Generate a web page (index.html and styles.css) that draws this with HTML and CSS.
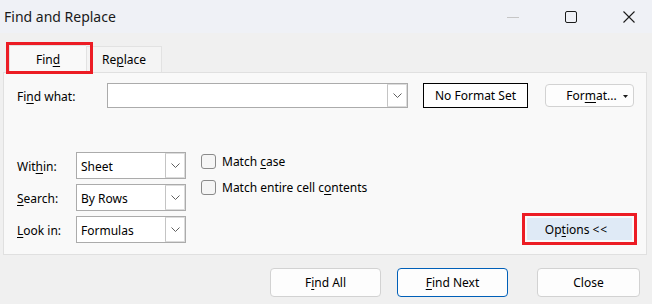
FILE: index.html
```html
<!DOCTYPE html>
<html>
<head>
<meta charset="utf-8">
<link rel="stylesheet" href="styles.css">
</head>
<body>
<div class="window">
  <div class="titlebar">
    <span class="title">Find and Replace</span>
    <div class="controls">
      <svg class="ctl" width="12" height="12" viewBox="0 0 12 12"><line x1="0" y1="6.5" x2="12" y2="6.5" stroke="#c6c6c6" stroke-width="1"/></svg>
      <svg class="ctl" width="12" height="12" viewBox="0 0 12 12"><rect x="0.5" y="0.5" width="11" height="11" rx="1.5" fill="none" stroke="#1b1b1b" stroke-width="1"/></svg>
      <svg class="ctl" width="12" height="12" viewBox="0 0 12 12"><path d="M0.5 0.5 L11.5 11.5 M11.5 0.5 L0.5 11.5" stroke="#1b1b1b" stroke-width="1.1" fill="none"/></svg>
    </div>
  </div>
  <div class="content">
    <div class="tabs">
      <div class="tab active">Fin<u>d</u></div>
      <div class="tab">Re<u>p</u>lace</div>
    </div>
    <div class="panel">
      <div class="row-find">
        <span class="label find-label">Fi<u>n</u>d what:</span>
        <div class="combo find-input">
          <span class="combo-text"></span>
          <span class="drop"><svg width="9" height="5" viewBox="0 0 9 5"><path d="M0.5 0.5 L4.5 4.5 L8.5 0.5" fill="none" stroke="#5f5f5f" stroke-width="1"/></svg></span>
        </div>
        <div class="noformat">No Format Set</div>
        <div class="btn format">For<u>m</u>at...<svg class="caret" width="5" height="3" viewBox="0 0 5 3"><path d="M0 0 L5 0 L2.5 3 Z" fill="#1b1b1b"/></svg></div>
      </div>
      <div class="row-opts">
        <div class="fields">
          <span class="label">Wit<u>h</u>in:</span>
          <div class="combo">
            <span class="combo-text">Sheet</span>
            <span class="drop"><svg width="9" height="5" viewBox="0 0 9 5"><path d="M0.5 0.5 L4.5 4.5 L8.5 0.5" fill="none" stroke="#5f5f5f" stroke-width="1"/></svg></span>
          </div>
          <span class="label"><u>S</u>earch:</span>
          <div class="combo">
            <span class="combo-text">By Rows</span>
            <span class="drop"><svg width="9" height="5" viewBox="0 0 9 5"><path d="M0.5 0.5 L4.5 4.5 L8.5 0.5" fill="none" stroke="#5f5f5f" stroke-width="1"/></svg></span>
          </div>
          <span class="label"><u>L</u>ook in:</span>
          <div class="combo">
            <span class="combo-text">Formulas</span>
            <span class="drop"><svg width="9" height="5" viewBox="0 0 9 5"><path d="M0.5 0.5 L4.5 4.5 L8.5 0.5" fill="none" stroke="#5f5f5f" stroke-width="1"/></svg></span>
          </div>
        </div>
        <div class="checks">
          <label class="check"><span class="box"></span><span>Match <u>c</u>ase</span></label>
          <label class="check"><span class="box"></span><span>Match entire cell c<u>o</u>ntents</span></label>
        </div>
        <div class="btn options">Op<u>t</u>ions <span class="lt">&lt;&lt;</span></div>
      </div>
    </div>
    <div class="actions">
      <div class="btn action">F<u>i</u>nd All</div>
      <div class="btn action primary"><u>F</u>ind Next</div>
      <div class="btn action close">Close</div>
    </div>
  </div>
</div>
</body>
</html>
```

FILE: styles.css
```css
* { box-sizing: border-box; }
html, body {
  margin: 0;
  padding: 0;
}
body {
  width: 652px;
  height: 304px;
  overflow: hidden;
  background: #f0f0f0;
  font-family: "Noto Sans", "Open Sans", sans-serif;
  font-size: 12px;
  color: #000;
}
u { text-decoration: underline; text-underline-offset: 2px; text-decoration-thickness: 1px; }

.window {
  width: 652px;
  height: 304px;
  display: flex;
  flex-direction: column;
}

.titlebar {
  height: 33px;
  background: #eff1f6;
  display: flex;
  align-items: center;
  justify-content: space-between;
  padding-left: 4px;
  padding-right: 17px;
}
.title {
  font-size: 14px;
  color: #1a1a1a;
  margin-top: -1px;
}
.controls {
  display: flex;
  align-items: center;
  gap: 46px;
}
.ctl { display: block; }

.content {
  flex: 1;
  padding: 0 5px 0 3px;
  display: flex;
  flex-direction: column;
}

.tabs {
  display: flex;
  align-items: flex-end;
  padding-left: 6px;
  height: 39px;
  position: relative;
  z-index: 2;
}
.tab {
  height: 26px;
  width: 76px;
  display: flex;
  align-items: center;
  justify-content: center;
  border: 1px solid #e2e2e2;
  border-bottom: none;
  background: #f4f4f4;
  padding-bottom: 1px;
}
.tab.active {
  width: 77px;
  height: 28px;
  background: #f9f9f9;
  margin-bottom: -1px;
  position: relative;
  z-index: 2;
  border-right: none;
}
.tab.active::after {
  content: "";
  position: absolute;
  left: -4px;
  right: -7px;
  top: -4px;
  bottom: -1px;
  border: 3px solid #ec1c24;
}

.panel {
  height: 183px;
  background: #f9f9f9;
  border: 1px solid #e0e0e0;
  padding: 10px 12px 11px 13px;
  display: flex;
  flex-direction: column;
}

.row-find {
  display: flex;
  align-items: center;
  height: 25px;
}
.label { white-space: nowrap; padding-top: 1px; }
.find-label { width: 90px; }

.combo {
  display: flex;
  height: 27px;
  background: #fff;
  border: 1px solid #ababab;
  align-items: stretch;
}
.combo-text {
  flex: 1;
  padding-left: 4px;
  padding-top: 1px;
  display: flex;
  align-items: center;
}
.drop {
  width: 20px;
  border: 1px solid #dcdcdc;
  border-left-color: #c4c4c4;
  display: flex;
  align-items: center;
  justify-content: center;
}
.drop svg { display: block; }
.find-input { width: 301px; height: 25px; }

.noformat {
  margin-left: 15px;
  width: 105px;
  height: 25px;
  border: 1px solid #000;
  background: #fff;
  display: flex;
  align-items: center;
  justify-content: center;
}

.btn {
  background: #fdfdfd;
  border: 1px solid #d2d2d2;
  border-radius: 4px;
  display: flex;
  align-items: center;
  justify-content: center;
  white-space: nowrap;
}
.format {
  margin-left: 17px;
  width: 89px;
  height: 23px;
  position: relative;
  padding-left: 4px;
}
.caret {
  position: absolute;
  right: 5px;
  top: 10px;
}

.row-opts {
  margin-top: 44px;
  display: flex;
  align-items: flex-start;
}
.fields {
  display: grid;
  grid-template-columns: 59px 110px;
  grid-auto-rows: 27px;
  row-gap: 5px;
  align-items: center;
}
.checks {
  margin-left: 15px;
  padding-top: 2px;
  display: flex;
  flex-direction: column;
  gap: 11px;
}
.check {
  display: flex;
  align-items: center;
  gap: 6px;
  height: 15px;
}
.box {
  width: 15px;
  height: 15px;
  border: 1px solid #8a8a8a;
  border-radius: 3px;
  background: #f5f5f5;
}

.options {
  margin-left: auto;
  margin-right: 2px;
  align-self: flex-end;
  margin-bottom: 3px;
  width: 105px;
  height: 22px;
  background: #dfeaf6;
  border: none;
  border-radius: 0;
  outline: 3px solid #ec1c24;
  outline-offset: 2px;
  padding-right: 6px;
}
.lt { letter-spacing: 1px; margin-left: 3px; }

.actions {
  margin-top: 13px;
  display: flex;
  padding-left: 267px;
}
.action {
  height: 29px;
  width: 111px;
}
.primary {
  margin-left: 16px;
  border-color: #005fb8;
}
.close {
  margin-left: 29px;
  width: 103px;
}
```
